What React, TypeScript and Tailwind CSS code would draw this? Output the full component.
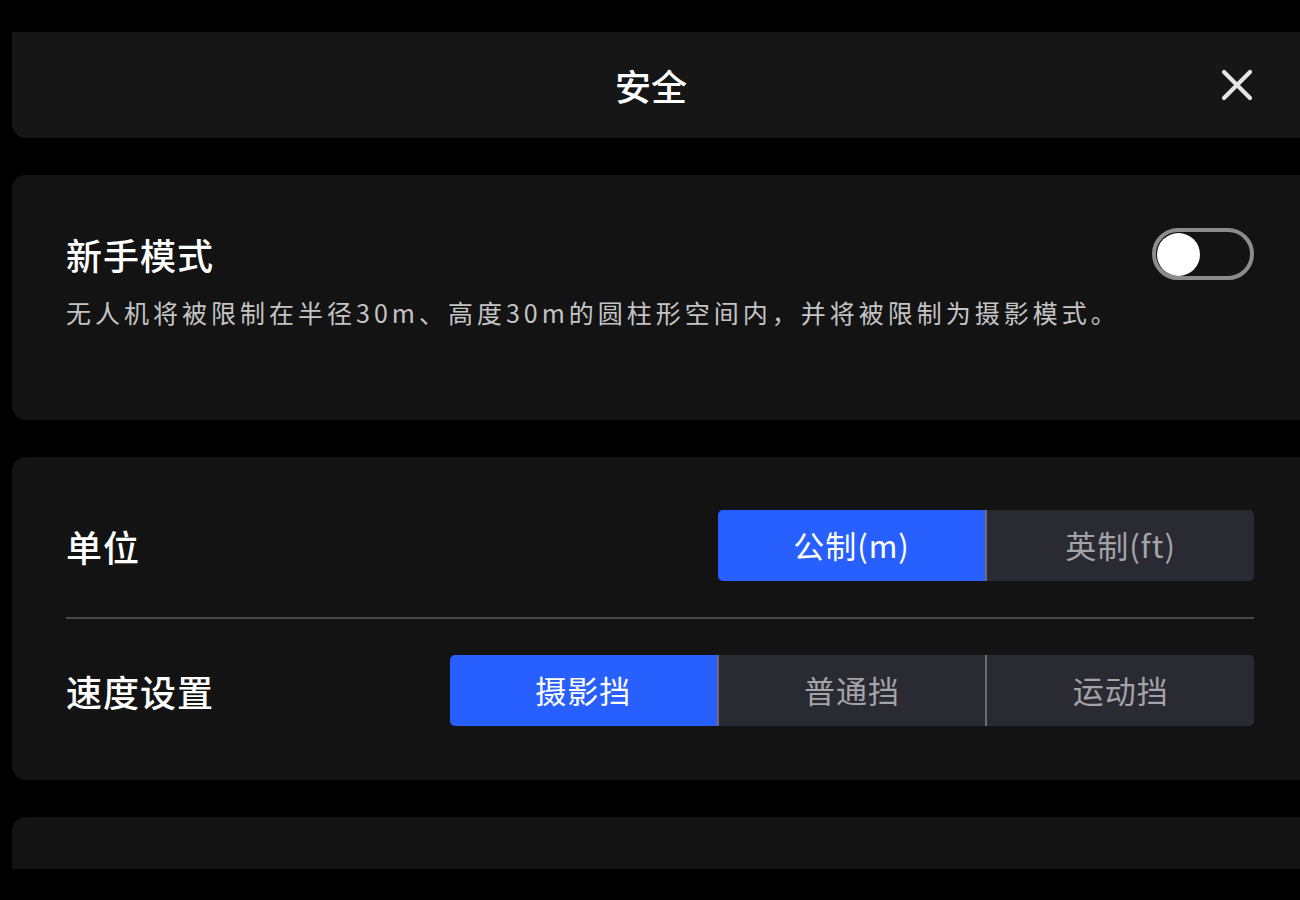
import { useState } from "react";

const font = { fontFamily: '"Noto Sans CJK SC", "Noto Sans", sans-serif' };

const Segmented = ({ options, active, onPick, className }: { options: string[]; active: number; onPick: (i: number) => void; className: string }) => (
  <div className={`flex h-[71px] rounded-[5px] overflow-hidden ${className}`}>
    {options.map((o, i) => (
      <button
        key={o}
        onClick={() => onPick(i)}
        className={`flex-1 flex items-center justify-center text-[31px] tracking-[1px] ${i > 0 ? "border-l-2 border-[#6b6b70]" : ""} ${
          i === active ? "bg-[#2860ff] text-white" : "bg-[#2a2a32] text-[#a3a3a8]"
        }`}
      >
        {o}
      </button>
    ))}
  </div>
);

export default function App() {
  const [beginner, setBeginner] = useState(false);
  const [unit, setUnit] = useState(0);
  const [speed, setSpeed] = useState(0);

  return (
    <div className="w-[1300px] h-[900px] bg-black overflow-hidden" style={font}>
      <div className="pt-[32px] pl-[12px] h-[869px] overflow-hidden flex flex-col gap-[37px]">
        {/* Header */}
        <div className="h-[106px] shrink-0 bg-[#161616] rounded-bl-[14px] flex items-center justify-center pr-[10px] relative">
          <h1 className="text-[36px] font-medium text-white">安全</h1>
          <button className="absolute right-[47px] top-1/2 -translate-y-1/2 text-[#e6e6e6]">
            <svg width="32" height="32" viewBox="0 0 32 32">
              <path d="M3 3L29 29M29 3L3 29" stroke="currentColor" strokeWidth="4.2" strokeLinecap="round" />
            </svg>
          </button>
        </div>

        {/* Beginner mode */}
        <div className="h-[245px] shrink-0 bg-[#131313] rounded-l-[14px] pl-[54px] pr-[46px] pt-[52px]">
          <div className="flex items-center justify-between">
            <div className="text-[36px] font-medium text-white tracking-[1px] leading-[54px]">新手模式</div>
            <button
              onClick={() => setBeginner(!beginner)}
              className={`w-[102px] h-[52px] rounded-full border-[4px] border-[#8c8c8c] flex items-center px-[1px] ${beginner ? "justify-end bg-[#2860ff]" : "justify-start"}`}
            >
              <span className="w-[43px] h-[43px] rounded-full bg-white block" />
            </button>
          </div>
          <p className="mt-[13px] text-[25px] text-[#c4c4c4] tracking-[4px]">
            无人机将被限制在半径30m、高度30m的圆柱形空间内，并将被限制为摄影模式。
          </p>
        </div>

        {/* Unit / speed */}
        <div className="h-[323px] shrink-0 bg-[#131313] rounded-l-[14px] pl-[54px] pr-[46px] pt-[53px]">
          <div className="flex items-center justify-between">
            <div className="text-[36px] font-medium text-white tracking-[1px]">单位</div>
            <Segmented options={["公制(m)", "英制(ft)"]} active={unit} onPick={setUnit} className="w-[536px]" />
          </div>
          <div className="h-[2px] bg-[#48484a] mt-[36px] mb-[36px]" />
          <div className="flex items-center justify-between">
            <div className="text-[36px] font-medium text-white tracking-[1px]">速度设置</div>
            <Segmented options={["摄影挡", "普通挡", "运动挡"]} active={speed} onPick={setSpeed} className="w-[804px]" />
          </div>
        </div>

        {/* Next card (cut off) */}
        <div className="h-[120px] shrink-0 bg-[#131313] rounded-l-[14px]" />
      </div>
    </div>
  );
}
